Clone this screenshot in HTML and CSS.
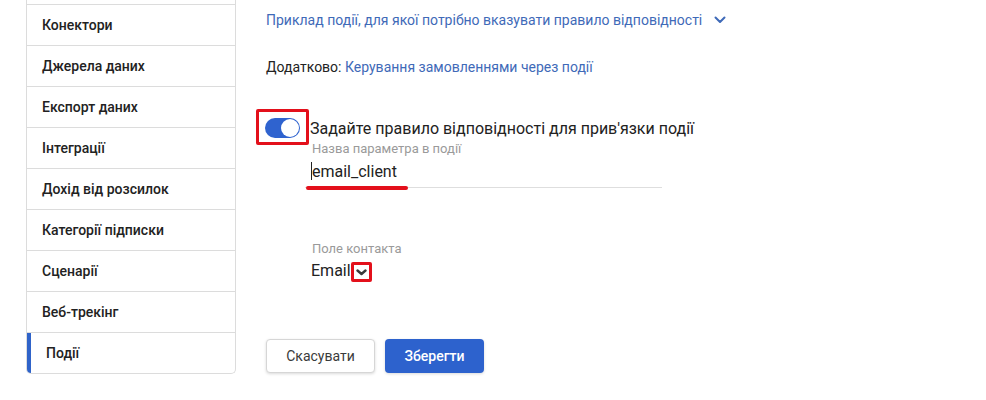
FILE: index.html
```html
<!DOCTYPE html>
<html lang="uk">
<head>
<meta charset="utf-8">
<link rel="stylesheet" href="styles.css">
</head>
<body>
<div class="page">
  <nav class="sidebar">
    <div class="item"></div>
    <div class="item">Конектори</div>
    <div class="item">Джерела даних</div>
    <div class="item">Експорт даних</div>
    <div class="item">Інтеграції</div>
    <div class="item">Дохід від розсилок</div>
    <div class="item">Категорії підписки</div>
    <div class="item">Сценарії</div>
    <div class="item">Веб-трекінг</div>
    <div class="item active">Події</div>
  </nav>
  <main class="main">
    <div class="example">
      <span class="link">Приклад події, для якої потрібно вказувати правило відповідності</span>
      <svg class="chev-blue" width="12" height="8" viewBox="0 0 12 8"><path d="M1.5 1.5 L6 6 L10.5 1.5" fill="none" stroke="#3f6ab8" stroke-width="2" stroke-linecap="round" stroke-linejoin="round"/></svg>
    </div>
    <div class="extra">Додатково: <span class="link">Керування замовленнями через події</span></div>
    <div class="rule">
      <span class="toggle"><span class="knob"></span></span>
      <span class="rule-label">Задайте правило відповідності для прив'язки події</span>
    </div>
    <div class="field">
      <div class="field-label">Назва параметра в події</div>
      <div class="input"><span class="caret"></span>email_client</div>
    </div>
    <div class="field contact">
      <div class="field-label">Поле контакта</div>
      <div class="select">Email<span class="select-chev"><svg width="11" height="7" viewBox="0 0 11 7"><path d="M1.5 1.5 L5.5 5 L9.5 1.5" fill="none" stroke="#3a3a3a" stroke-width="2.4" stroke-linecap="round" stroke-linejoin="round"/></svg></span></div>
    </div>
    <div class="actions">
      <button class="btn cancel">Скасувати</button>
      <button class="btn save">Зберегти</button>
    </div>
  </main>
</div>
</body>
</html>
```
FILE: styles.css
```css
*, *::before, *::after { box-sizing: border-box; }
html, body { margin: 0; padding: 0; background: #fff; }
body {
  font-family: Roboto, "Noto Sans", "Liberation Sans", sans-serif;
  color: #222;
  width: 986px;
  height: 400px;
  overflow: hidden;
}
.page {
  display: flex;
  align-items: flex-start;
}
.sidebar {
  margin-left: 26px;
  margin-top: -36px;
  width: 210px;
  border: 1px solid #dcdcdc;
  border-top: none;
  border-radius: 0 0 5px 5px;
  overflow: hidden;
  flex: none;
}
.item {
  height: 41px;
  border-bottom: 1px solid #dcdcdc;
  display: flex;
  align-items: center;
  padding-left: 15px;
  font-size: 14px;
  font-weight: 500;
  color: #222;
}
.item:last-child { border-bottom: none; height: 40px; }
.item.active {
  border-left: 4px solid #2f63c9;
  padding-left: 15px;
}
.main {
  margin-left: 29px;
  flex: 1;
  display: flex;
  flex-direction: column;
}
.link { color: #3f6ab8; }
.example {
  margin-top: 10px;
  margin-left: 1px;
  display: flex;
  align-items: center;
  gap: 12px;
  font-size: 14px;
  line-height: 20px;
}
.extra {
  margin-top: 27px;
  margin-left: 1px;
  font-size: 14px;
  line-height: 20px;
  color: #222;
}
.rule {
  margin-top: 40px;
  display: flex;
  align-items: center;
  gap: 10px;
  height: 22px;
}
.toggle {
  position: relative;
  width: 35px;
  height: 20px;
  border-radius: 10px;
  background: #2f63cf;
  flex: none;
}
.toggle::after {
  content: "";
  position: absolute;
  left: -9px;
  top: -9px;
  width: 53px;
  height: 36px;
  border: 3px solid #e3101b;
  border-radius: 2px;
}
.knob {
  position: absolute;
  right: 1px;
  top: 1px;
  width: 18px;
  height: 18px;
  border-radius: 50%;
  background: #fff;
}
.rule-label {
  font-size: 16px;
  color: #222;
}
.field {
  margin-left: 40px;
  width: 357px;
}
.field-label {
  padding-left: 7px;
  font-size: 13px;
  line-height: 16px;
  color: #9a9a9a;
  margin-top: 2px;
}
.input {
  position: relative;
  margin-top: 4px;
  padding-left: 6px;
  font-size: 16px;
  line-height: 22px;
  padding-bottom: 4px;
  border-bottom: 1px solid #dedede;
  color: #222;
}
.caret {
  display: inline-block;
  width: 1px;
  height: 18px;
  background: #222;
  vertical-align: -3px;
}
.input::after {
  content: "";
  position: absolute;
  left: 1px;
  width: 102px;
  bottom: -3px;
  height: 4px;
  border-radius: 2px;
  background: #e3101b;
}
.field.contact { margin-top: 51px; }
.select {
  padding-left: 6px;
  margin-top: 3px;
  font-size: 16px;
  line-height: 22px;
  display: flex;
  align-items: center;
}
.select-chev {
  margin-left: 0;
  width: 21px;
  height: 20px;
  border: 3px solid #e3101b;
  border-radius: 2px;
  display: flex;
  align-items: center;
  justify-content: center;
  margin-top: 2px;
}
.actions {
  margin-top: 57px;
  margin-left: 1px;
  display: flex;
  gap: 10px;
}
.btn {
  font-family: inherit;
  height: 34px;
  border-radius: 4px;
  font-size: 14px;
  cursor: pointer;
}
.cancel {
  width: 109px;
  background: #fff;
  border: 1px solid #d6d6d6;
  color: #3a3a3a;
  box-shadow: 0 1px 3px rgba(0,0,0,0.15);
}
.save {
  width: 99px;
  background: #2d62cd;
  border: none;
  color: #fff;
  font-weight: 500;
  box-shadow: 0 1px 3px rgba(0,0,0,0.15);
}
```
